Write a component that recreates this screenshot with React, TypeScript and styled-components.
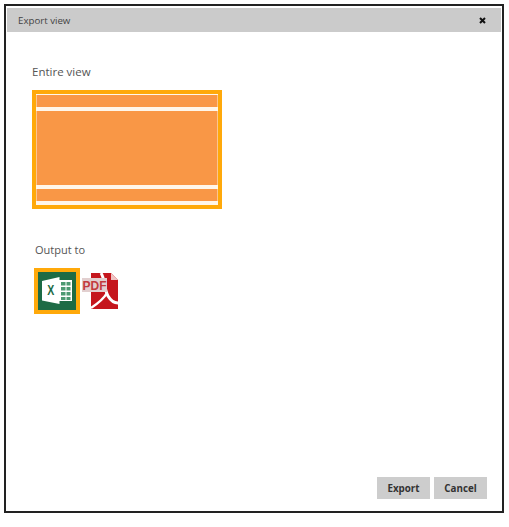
import React from 'react'
import styled, { createGlobalStyle } from 'styled-components'

const GlobalStyle = createGlobalStyle`
  html, body {
    margin: 0;
    padding: 0;
    background: #fff;
  }
  body {
    width: 509px;
    height: 527px;
    overflow: hidden;
    font-family: "Open Sans", "Liberation Sans", sans-serif;
  }
`

const ExcelIcon = () => (
  <svg width="38" height="38" viewBox="0 0 38 38">
    <rect width="38" height="38" fill="#1d6b45" />
    <rect x="20" y="8" width="14" height="21" fill="#fff" />
    <g fill="#4d9a72">
      <rect x="23" y="10" width="4.5" height="3.5" />
      <rect x="28.5" y="10" width="4" height="3.5" />
      <rect x="23" y="15" width="4.5" height="3.5" />
      <rect x="28.5" y="15" width="4" height="3.5" />
      <rect x="23" y="20" width="4.5" height="3.5" />
      <rect x="28.5" y="20" width="4" height="3.5" />
      <rect x="23" y="25" width="4.5" height="3" />
      <rect x="28.5" y="25" width="4" height="3" />
    </g>
    <path d="M4 9 L21.500 5 V32 L4 28.500 Z" fill="#fff" />
    <text x="12.700" y="23.500" fontFamily="Liberation Sans" fontSize="15.500" fontWeight="700" fill="#1d6b45" textAnchor="middle" transform="translate(4.060 0) scale(0.68 1)">X</text>
  </svg>
)

const PdfIcon = () => (
  <svg width="38" height="38" viewBox="0 0 38 38">
    <path d="M9 1 H29 L36 8 V37 H9 Z" fill="#c5161d" />
    <path d="M29 1 L36 8 H29 Z" fill="#efc4c4" />
    <path d="M19 1 C23 7 22 17 26 24 C29 29 33 31 36 31" fill="none" stroke="#fff" strokeWidth="3" />
    <path d="M9 36 C15 32 21 28 25 21" fill="none" stroke="#fff" strokeWidth="2.5" />
    <rect x="0" y="6" width="25" height="14" fill="#e2cfcf" />
    <text x="12.500" y="17.500" fontFamily="Liberation Sans" fontSize="12" fontWeight="700" fill="#c23b3f" textAnchor="middle">PDF</text>
  </svg>
)

const App: React.FC = () => {
  return (
    <>
      <GlobalStyle />
      <StyledDialog>
        <StyledHeader>
          <StyledTitle>Export view</StyledTitle>
          <StyledClose>
            <svg width="7" height="7" viewBox="0 0 7 7">
              <path d="M1 1 L6 6 M6 1 L1 6" stroke="#111" strokeWidth="2" />
            </svg>
          </StyledClose>
        </StyledHeader>
        <StyledBody>
          <StyledLabel>Entire view</StyledLabel>
          <StyledPreview>
            <StyledBand $height={12} />
            <StyledBand $height={74} />
            <StyledBand $height={12} />
          </StyledPreview>
          <StyledOutputLabel>Output to</StyledOutputLabel>
          <StyledFormats>
            <StyledFormat $selected>
              <ExcelIcon />
            </StyledFormat>
            <StyledFormat>
              <PdfIcon />
            </StyledFormat>
          </StyledFormats>
        </StyledBody>
        <StyledFooter>
          <StyledButton type="button">Export</StyledButton>
          <StyledButton type="button">Cancel</StyledButton>
        </StyledFooter>
      </StyledDialog>
    </>
  )
}

const StyledDialog = styled.div`
  box-sizing: border-box;
  width: 500px;
  height: 509px;
  margin: 4px 0 0 4px;
  border: 2px solid #222;
  padding: 2px 1px 0;
  display: flex;
  flex-direction: column;
  background: #fff;
`

const StyledHeader = styled.div`
  height: 24px;
  background: #cbcbcb;
  display: flex;
  align-items: center;
  justify-content: space-between;
  padding: 0 15px 0 11px;
  flex-shrink: 0;
`

const StyledTitle = styled.div`
  font-size: 9.7px;
  color: #444;
`

const StyledClose = styled.div`
  display: flex;
  align-items: center;
`

const StyledBody = styled.div`
  flex: 1;
  padding: 32px 0 0 25px;
  display: flex;
  flex-direction: column;
  align-items: flex-start;
`

const StyledLabel = styled.div`
  font-size: 11.5px;
  line-height: 16px;
  color: #555;
  height: 18px;
  margin-bottom: 8px;
`

const StyledOutputLabel = styled(StyledLabel)`
  margin: 33px 0 8px 3px;
  font-size: 11px;
`

const StyledPreview = styled.div`
  box-sizing: border-box;
  width: 190px;
  height: 119px;
  border: 4px solid #ffa90a;
  padding: 1px 0 4px;
  background: #fff6ea;
  display: flex;
  flex-direction: column;
  gap: 4px;
`

const StyledBand = styled.div<{ $height: number }>`
  height: ${(props) => props.$height}px;
  background: #f99746;
  border-left: 1px solid #fcc490;
  border-right: 1px solid #fcc490;
  flex-shrink: 0;
`

const StyledFormats = styled.div`
  display: flex;
  align-items: center;
  gap: 2px;
  margin-left: 2px;
`

const StyledFormat = styled.div<{ $selected?: boolean }>`
  display: flex;
  padding: ${(props) => (props.$selected ? '4px' : '0')};
  background: ${(props) => (props.$selected ? '#ffa90a' : 'transparent')};
`

const StyledFooter = styled.div`
  display: flex;
  justify-content: flex-end;
  gap: 4px;
  padding: 0 14px 12px 0;
`

const StyledButton = styled.button`
  box-sizing: border-box;
  height: 22px;
  width: 53px;
  border: none;
  padding: 0;
  background: #cdcdcd;
  color: #333;
  font-family: "Open Sans", "Liberation Sans", sans-serif;
  font-size: 9.8px;
  font-weight: 700;
`

export default App
